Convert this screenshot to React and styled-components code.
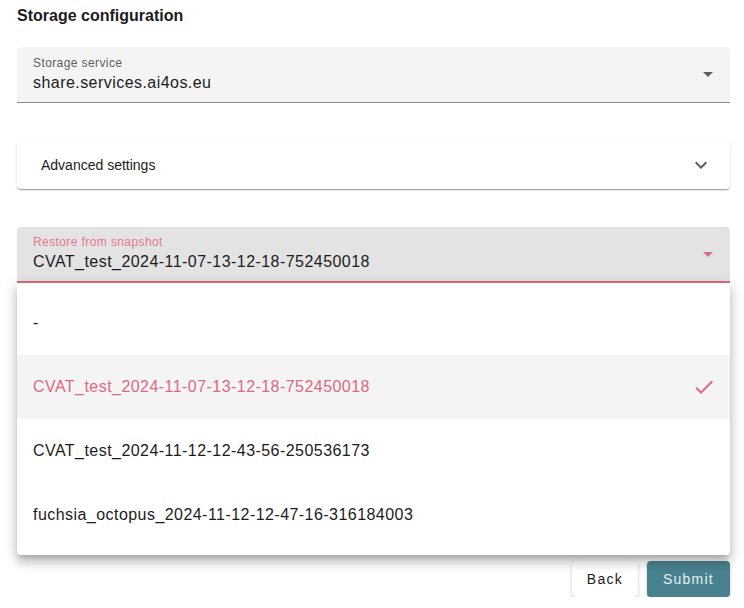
import styled, { createGlobalStyle } from 'styled-components'

const Global = createGlobalStyle`
  body {
    margin: 0;
    background: #fff;
    font-family: "Liberation Sans", Arial, sans-serif;
    color: #1d1b20;
  }
`

const Page = styled.div`
  width: 713px;
  padding: 4px 14px 0 17px;
`

const Title = styled.h3`
  margin: 0;
  font-size: 16px;
  line-height: 24px;
  font-weight: 700;
`

const FieldWrap = styled.div`
  position: relative;
  margin-top: ${p => p.$top}px;
`

const Field = styled.div`
  height: 56px;
  box-sizing: border-box;
  background: ${p => (p.$focused ? '#e3e3e3' : '#f4f4f4')};
  border-radius: 4px 4px 0 0;
  border-bottom: ${p => (p.$focused ? '2px solid #dc6a80' : '1px solid #8a8a8a')};
  display: flex;
  align-items: center;
  padding: 0 16px;
`

const FieldText = styled.div`
  flex: 1;
  padding-top: ${p => (p.$focused ? '0' : '1px')};
`

const Label = styled.div`
  font-size: 12px;
  line-height: 16px;
  letter-spacing: 0.4px;
  color: ${p => (p.$focused ? '#e3788d' : '#5f5d62')};
`

const Value = styled.div`
  font-size: 16px;
  line-height: 24px;
  letter-spacing: 0.45px;
`

const Arrow = styled.div`
  width: 0;
  height: 0;
  border-left: 5px solid transparent;
  border-right: 5px solid transparent;
  border-top: 5px solid ${p => p.$color};
  margin-right: 1px;
`

const Panel = styled.div`
  margin-top: 38px;
  height: 48px;
  border-radius: 4px;
  background: #fff;
  box-shadow: 0 2px 1px -1px rgba(0, 0, 0, 0.2), 0 1px 1px 0 rgba(0, 0, 0, 0.14),
    0 1px 3px 0 rgba(0, 0, 0, 0.12);
  display: flex;
  align-items: center;
  justify-content: space-between;
  padding: 0 24px;
  font-size: 14px;
`

const Menu = styled.div`
  position: absolute;
  top: 56px;
  left: 0;
  right: 0;
  background: #fff;
  padding: 8px 0;
  border-radius: 0 0 4px 4px;
  box-shadow: 0 5px 5px -3px rgba(0, 0, 0, 0.2), 0 8px 10px 1px rgba(0, 0, 0, 0.14),
    0 3px 14px 2px rgba(0, 0, 0, 0.12);
  z-index: 2;
`

const Option = styled.div`
  height: 64px;
  display: flex;
  align-items: center;
  justify-content: space-between;
  padding: 0 16px;
  font-size: 16px;
  letter-spacing: 0.45px;
  background: ${p => (p.$selected ? '#f4f4f4' : '#fff')};
  color: ${p => (p.$selected ? '#dc6a80' : '#1d1b20')};
`

const Actions = styled.div`
  display: flex;
  justify-content: flex-end;
  gap: 9px;
  margin-top: 278px;
`

const Button = styled.button`
  height: 36px;
  padding: 0 ${p => (p.$primary ? '16px' : '15px')};
  border: none;
  border-radius: 4px;
  font-family: "Liberation Sans", Arial, sans-serif;
  font-size: 14px;
  font-weight: 400;
  letter-spacing: 1.25px;
  background: ${p => (p.$primary ? '#4a818f' : '#fff')};
  color: ${p => (p.$primary ? '#e3eff1' : '#1d1b20')};
  box-shadow: 0 3px 1px -2px rgba(0, 0, 0, 0.2), 0 2px 2px 0 rgba(0, 0, 0, 0.14),
    0 1px 5px 0 rgba(0, 0, 0, 0.12);
`

const options = [
  '-',
  'CVAT_test_2024-11-07-13-12-18-752450018',
  'CVAT_test_2024-11-12-12-43-56-250536173',
  'fuchsia_octopus_2024-11-12-12-47-16-316184003',
]
const selected = 1

function App() {
  return (
    <Page>
      <Global />
      <Title>Storage configuration</Title>
      <FieldWrap $top={19}>
        <Field>
          <FieldText>
            <Label>Storage service</Label>
            <Value>share.services.ai4os.eu</Value>
          </FieldText>
          <Arrow $color="#5f5d62" />
        </Field>
      </FieldWrap>
      <Panel>
        <span>Advanced settings</span>
        <svg width="24" height="24" viewBox="0 0 24 24" style={{ marginRight: -7 }}>
          <path d="M7.41 8.59 12 13.17l4.59-4.58L18 10l-6 6-6-6z" fill="#5f5d62" />
        </svg>
      </Panel>
      <FieldWrap $top={38}>
        <Field $focused>
          <FieldText $focused>
            <Label $focused>Restore from snapshot</Label>
            <Value>{options[selected]}</Value>
          </FieldText>
          <Arrow $color="#dc6a80" />
        </Field>
        <Menu>
          {options.map((o, i) => (
            <Option key={o} $selected={i === selected}>
              <span>{o}</span>
              {i === selected && (
                <svg width="24" height="24" viewBox="0 0 24 24" style={{ marginRight: -2 }}>
                  <path d="M9 16.17 4.83 12l-1.42 1.41L9 19 21 7l-1.41-1.41z" fill="#dc6a80" />
                </svg>
              )}
            </Option>
          ))}
        </Menu>
      </FieldWrap>
      <Actions>
        <Button>Back</Button>
        <Button $primary>Submit</Button>
      </Actions>
    </Page>
  )
}

export default App
